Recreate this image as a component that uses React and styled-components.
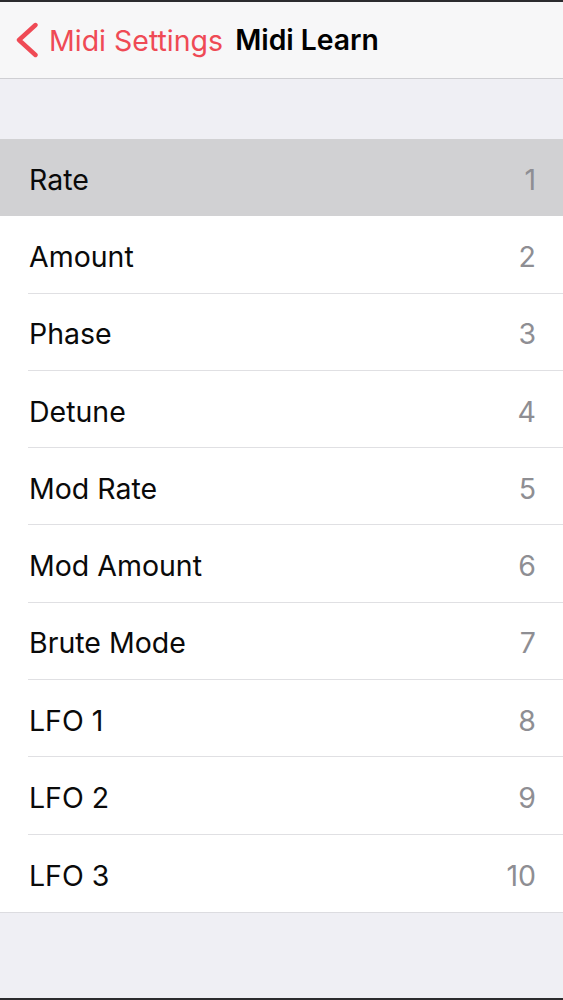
import React from "react";
import styled, { createGlobalStyle } from "styled-components";

const Global = createGlobalStyle`
  html, body { margin: 0; padding: 0; background: #efeff4; }
  * { box-sizing: border-box; }
`;

const Screen = styled.div`
  width: 563px;
  height: 1000px;
  display: flex;
  flex-direction: column;
  background: #efeff4;
  border-top: 2px solid #2b2b2e;
  border-bottom: 2px solid #2b2b2e;
  font-family: Inter, "Liberation Sans", sans-serif;
  overflow: hidden;
`;

const NavBar = styled.div`
  height: 77px;
  flex: none;
  display: flex;
  align-items: center;
  padding-left: 14px;
  background: #f7f7f8;
  border-bottom: 1px solid #cfcfd3;
`;

const BackButton = styled.div`
  display: flex;
  align-items: center;
  gap: 10px;
  color: #ef4a55;
  font-size: 28.5px;
`;

const Title = styled.div`
  margin-left: 12px;
  font-size: 28.3px;
  font-weight: 600;
  color: #000;
`;

const Spacer = styled.div`
  height: 60px;
  flex: none;
`;

const Group = styled.div`
  background: #fff;
  border-bottom: 1px solid #dcdce0;
`;

const Row = styled.div`
  height: 77.3px;
  display: flex;
  background: ${(p) => (p.$active ? "#d1d1d3" : "#fff")};
  padding-left: 28px;
`;

const RowInner = styled.div`
  flex: 1;
  display: flex;
  align-items: center;
  justify-content: space-between;
  padding: 4px 27px 0 1px;
  border-bottom: ${(p) => (p.$last ? "none" : "1px solid #e0e0e3")};
`;

const Label = styled.span`
  font-size: 28.5px;
  color: #0a0a0a;
`;

const Value = styled.span`
  font-size: 28.5px;
  color: #8e8e93;
`;

const items = [
  "Rate",
  "Amount",
  "Phase",
  "Detune",
  "Mod Rate",
  "Mod Amount",
  "Brute Mode",
  "LFO 1",
  "LFO 2",
  "LFO 3",
];

export default function App() {
  return (
    <>
      <Global />
      <Screen>
        <NavBar>
          <BackButton>
            <svg width="25" height="36" viewBox="0 0 25 36" fill="none">
              <path
                d="M21.5 3 L5 18 L21.5 33"
                stroke="#ef4a55"
                strokeWidth="4.4"
                strokeLinecap="round"
                strokeLinejoin="round"
              />
            </svg>
            <span>Midi Settings</span>
          </BackButton>
          <Title>Midi Learn</Title>
        </NavBar>
        <Spacer />
        <Group>
          {items.map((label, i) => (
            <Row key={label} $active={i === 0}>
              <RowInner $last={i === 0 || i === items.length - 1}>
                <Label>{label}</Label>
                <Value>{i + 1}</Value>
              </RowInner>
            </Row>
          ))}
        </Group>
      </Screen>
    </>
  );
}
